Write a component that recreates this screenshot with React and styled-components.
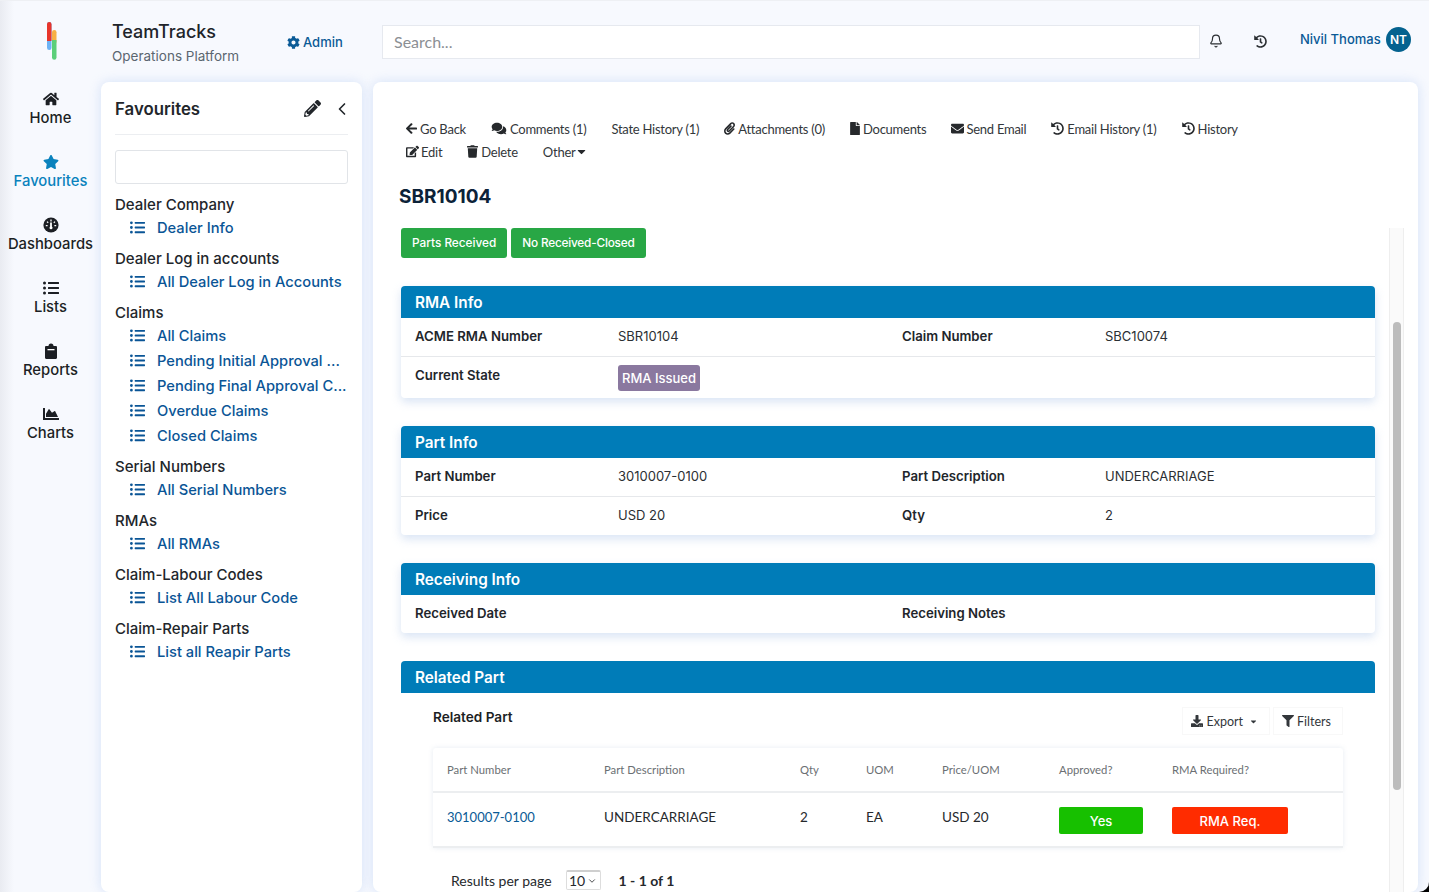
import React from 'react';
import styled, { createGlobalStyle } from 'styled-components';
import {
  FaHome, FaStar, FaListUl, FaChartArea, FaCog, FaPencilAlt,
  FaArrowLeft, FaComments, FaPaperclip, FaFile, FaEnvelope, FaHistory, FaEdit, FaTrash,
  FaCaretDown, FaDownload, FaFilter,
} from 'react-icons/fa';
import { ChevronLeft, ChevronDown, Bell } from 'lucide-react';

const GlobalStyle = createGlobalStyle`
  html, body { margin: 0; height: 100%; overflow: hidden; background: #000; }
  body { font-family: Inter, "Noto Sans", sans-serif; color: #1c1f24; }
  * { box-sizing: border-box; }
`;

const Page = styled.div`
  height: 100vh;
  display: grid;
  grid-template-columns: 101px 1fr;
  grid-template-rows: 82px 1fr;
  overflow: hidden;
  border-bottom-right-radius: 10px;
  background: linear-gradient(90deg, #e9ebf1 0, #f7f9fe 14px);
  box-shadow: inset 0 1px 0 #eef0f4;
`;

const LogoCell = styled.div`
  display: flex;
  justify-content: center;
  padding: 21px 0 0 3px;
`;

const Header = styled.header`
  display: flex;
  align-items: flex-start;
  padding: 25px 18px 0 11px;
`;

const Brand = styled.div`
  width: 175px;
`;

const BrandName = styled.div`
  font-size: 18px;
  line-height: 14px;
  font-weight: 500;
  color: #20242a;
`;

const BrandSub = styled.div`
  font-size: 13.5px;
  margin-top: 9px;
  color: #5b6670;
`;

const AdminLink = styled.a`
  width: 95px;
  display: flex;
  align-items: center;
  gap: 3px;
  font-size: 13px;
  font-weight: 500;
  color: #0a5a96;
  padding-top: 9px;
`;

const Search = styled.div`
  width: 818px;
  height: 34px;
  background: #fff;
  border: 1px solid #e6e9ef;
  font-family: Lato, sans-serif;
  font-size: 16px;
  color: #8b8f94;
  display: flex;
  align-items: center;
  padding: 0 0 2px 11px;
`;

const IconSlot = styled.div`
  width: ${p => p.$w}px;
  height: 34px;
  margin-top: -1px;
  display: flex;
  align-items: center;
  justify-content: center;
  color: #2b2f33;
`;

const UserName = styled.div`
  font-size: 13px;
  font-weight: 500;
  color: #0a5a96;
  width: 86px;
  margin-left: 12px;
  padding-top: 6px;
`;

const Avatar = styled.div`
  width: 25px;
  height: 25px;
  border-radius: 50%;
  margin-top: 2px;
  background: #04628f;
  color: #fff;
  font-size: 12px;
  font-weight: 600;
  display: flex;
  align-items: center;
  justify-content: center;
`;

const Rail = styled.nav`
  display: flex;
  flex-direction: column;
  padding-top: 7px;
`;

const RailItem = styled.div`
  height: 63px;
  display: flex;
  flex-direction: column;
  align-items: center;
  gap: 1px;
  padding-top: 1px;
  font-size: 14.8px;
  font-weight: 500;
  color: ${p => (p.$active ? '#0a82bd' : '#1c1f24')};
  svg { font-size: 16px; height: 18px; }
`;

const Body = styled.div`
  display: flex;
  gap: 11px;
  padding-right: 11px;
  min-height: 0;
`;

const Panel = styled.aside`
  width: 261px;
  background: #fff;
  border-radius: 8px;
  box-shadow: 0 0 12px rgba(170, 198, 240, 0.45);
  padding: 0 14px;
`;

const PanelHead = styled.div`
  height: 53px;
  border-bottom: 1px solid #eceef1;
  display: flex;
  align-items: center;
  font-size: 16.8px;
  font-weight: 600;
  color: #22262b;
  padding-top: 1px;
`;

const PanelTitle = styled.div`
  flex: 1;
`;

const PanelTool = styled.div`
  display: flex;
  align-items: center;
  margin-left: ${p => p.$gap || 0}px;
  margin-right: ${p => p.$right || 0}px;
`;

const PanelInput = styled.div`
  height: 34px;
  margin-top: 15px;
  margin-bottom: 9px;
  border: 1px solid #e1e4e8;
  border-radius: 3px;
`;

const Group = styled.div`
  margin-bottom: 7px;
`;

const GroupName = styled.div`
  height: 22px;
  font-size: 15px;
  line-height: 24px;
  font-weight: 500;
  color: #22262b;
`;

const FavLink = styled.div`
  display: flex;
  align-items: center;
  height: 25px;
  padding-left: 15px;
  gap: 12px;
  font-size: 14.7px;
  font-weight: 500;
  color: #0a5596;
  white-space: nowrap;
  svg { flex: none; font-size: 15px; }
`;

const Main = styled.main`
  flex: 1;
  min-width: 0;
  background: #fff;
  border-radius: 8px;
  box-shadow: 0 0 12px rgba(170, 198, 240, 0.45);
  display: flex;
  flex-direction: column;
  padding-top: 35px;
  overflow: hidden;
`;

const Toolbar = styled.div`
  display: flex;
  flex-wrap: wrap;
  column-gap: 25px;
  padding: 0 160px 0 33px;
`;

const ToolItem = styled.a`
  display: flex;
  align-items: center;
  gap: ${p => p.$gap ?? 3}px;
  height: 23px;
  font-family: Lato, sans-serif;
  font-size: 13px;
  letter-spacing: -0.25px;
  color: #33373b;
  white-space: nowrap;
  svg { height: 13px; width: ${p => p.$iconW || 13}px; color: #26292c; flex: none; }
`;

const RecordTitle = styled.h1`
  margin: 22px 0 0 26px;
  font-size: 19px;
  line-height: 23px;
  font-weight: 700;
  color: #0c2238;
`;

const Scroller = styled.div`
  flex: 1;
  min-height: 0;
  margin-top: 20px;
  display: flex;
  overflow: hidden;
`;

const ScrollContent = styled.div`
  width: 1016px;
  padding: 0 14px 0 28px;
  flex: none;
`;

const ScrollTrack = styled.div`
  width: 15px;
  background: #fafafa;
  border-left: 1px solid #eee;
  border-right: 1px solid #eee;
  padding: 94px 2px 0 3px;
`;

const ScrollThumb = styled.div`
  width: 8px;
  height: 468px;
  border-radius: 4px;
  background: #bcbcbc;
`;

const StateRow = styled.div`
  display: flex;
  gap: 4px;
  margin-bottom: 28px;
`;

const StateButton = styled.div`
  height: 30px;
  padding: 0 11px;
  border-radius: 3px;
  background: #28a745;
  color: #fff;
  font-size: 11.8px;
  font-weight: 500;
  letter-spacing: ${p => (p.$tight ? '-0.2px' : '0')};
  display: flex;
  align-items: center;
`;

const Card = styled.section`
  margin-bottom: 28px;
  border-radius: 4px;
  box-shadow: 0 4px 10px rgba(170, 195, 230, 0.45);
`;

const CardHead = styled.div`
  height: 32px;
  background: #007cb8;
  color: #fff;
  border-radius: 4px 4px 0 0;
  font-size: 15.3px;
  font-weight: 600;
  padding-left: 14px;
  display: flex;
  align-items: center;
`;

const FieldRow = styled.div`
  display: grid;
  grid-template-columns: 203px 284px 203px 1fr;
  height: ${p => p.$h}px;
  padding: 10px 0 0 14px;
  font-size: 13px;
  border-bottom: ${p => (p.$last ? 'none' : '1px solid #e6e8eb')};
`;

const FieldLabel = styled.div`
  font-size: 13.2px;
  font-weight: 600;
  color: #22262b;
`;

const FieldValue = styled.div`
  color: #2b2f33;
`;

const StateBadge = styled.span`
  display: inline-block;
  vertical-align: top;
  height: 26px;
  line-height: 26px;
  margin-top: -2px;
  padding: 0 4px;
  border-radius: 3px;
  background: #8a789f;
  color: #fff;
  font-weight: 500;
`;

const Related = styled.div`
  padding: 0 32px;
`;

const RelatedHead = styled.div`
  height: 55px;
  display: flex;
  align-items: flex-start;
`;

const RelatedTitle = styled.div`
  flex: 1;
  padding-top: 16px;
  font-size: 13.6px;
  font-weight: 600;
`;

const GridButton = styled.div`
  height: 28px;
  margin-top: 14px;
  padding: 0 11px 0 8px;
  margin-left: ${p => p.$gap || 0}px;
  border: 1px solid #f8f8f8;
  display: flex;
  align-items: center;
  gap: 3px;
  font-family: Lato, sans-serif;
  font-size: 12.5px;
  color: #33373b;
  svg { font-size: 12px; }
`;

const ExportCaret = styled(FaCaretDown)`
  margin-left: 3px;
`;

const Table = styled.table`
  width: 100%;
  border-collapse: collapse;
  table-layout: fixed;
  font-family: Lato, sans-serif;
  box-shadow: 0 0 5px rgba(200, 210, 225, 0.45);
  border-radius: 3px;
`;

const Th = styled.th`
  height: 44px;
  width: ${p => p.$w}px;
  padding: 0 0 0 14px;
  text-align: left;
  font-size: 11.3px;
  font-weight: 400;
  color: #6b6f73;
  border-bottom: 2px solid #eceef0;
`;

const Td = styled.td`
  height: 55px;
  padding: 0 0 6px 14px;
  font-size: 13.5px;
  color: #26292c;
  border-bottom: 2px solid #eceef0;
`;

const PartLink = styled.a`
  font-size: 13px;
  color: #0a5a96;
`;

const Pill = styled.div`
  width: ${p => p.$w}px;
  height: 27px;
  margin-top: 8px;
  border-radius: 2px;
  background: ${p => p.$bg};
  color: #fff;
  font-family: Inter, sans-serif;
  font-size: 13px;
  font-weight: 500;
  display: flex;
  align-items: center;
  justify-content: center;
`;

const Pager = styled.div`
  display: flex;
  align-items: center;
  height: 24px;
  margin-top: 20px;
  padding-left: 18px;
  font-family: Lato, sans-serif;
  font-size: 14px;
  color: #26292c;
`;

const PerPage = styled.div`
  margin: 0 18px 0 14px;
  width: 35px;
  height: 20px;
  border: 1px solid #ddd;
  border-top: 2px solid #cfcfcf;
  border-radius: 2px;
  display: flex;
  align-items: center;
  justify-content: center;
  gap: 2px;
`;

const PageCount = styled.b`
  font-weight: 700;
`;

const Logo = () => (
  <svg width="12" height="40" viewBox="0 0 12 40">
    <rect x="1" y="1" width="4.5" height="28" rx="2.2" fill="#6db3f5" />
    <path d="M1 3.2a2.2 2.2 0 0 1 4.5 0V20H1z" fill="#e8352b" />
    <rect x="6" y="9" width="4.5" height="14" rx="2.2" fill="#f7b044" />
    <path d="M6 19h4.5v17.5a2.2 2.2 0 0 1-4.5 0z" fill="#5ccf7a" />
  </svg>
);

const GaugeIcon = () => (
  <svg viewBox="0 0 16 16" width="16" height="16">
    <circle cx="8" cy="8" r="7.6" fill="currentColor" />
    <path d="M8 2.5v2M4 4.6l1.2 1.2M12 4.6l-1.2 1.2M2.8 8.6h1.8M11.4 8.6h1.8" stroke="#fff" strokeWidth="1.3" />
    <path d="M8 5.5v5" stroke="#fff" strokeWidth="1.8" />
    <circle cx="8" cy="10.8" r="1.5" fill="#fff" />
  </svg>
);

const ReportIcon = () => (
  <svg viewBox="0 0 16 16" width="16" height="16">
    <path d="M3.2 3h2.3a2.5 2.5 0 0 1 5 0h2.3c.7 0 1.2.5 1.2 1.2v10.6c0 .7-.5 1.2-1.2 1.2H3.2C2.5 16 2 15.5 2 14.8V4.2C2 3.5 2.5 3 3.2 3z" fill="currentColor" />
    <rect x="4.5" y="6" width="7" height="1.3" fill="#fff" />
  </svg>
);

const navItems = [
  { label: 'Home', Icon: FaHome },
  { label: 'Favourites', Icon: FaStar, active: true },
  { label: 'Dashboards', Icon: GaugeIcon },
  { label: 'Lists', Icon: FaListUl },
  { label: 'Reports', Icon: ReportIcon },
  { label: 'Charts', Icon: FaChartArea },
];

const favourites = [
  { name: 'Dealer Company', links: ['Dealer Info'] },
  { name: 'Dealer Log in accounts', links: ['All Dealer Log in Accounts'] },
  { name: 'Claims', links: ['All Claims', 'Pending Initial Approval ...', 'Pending Final Approval C...', 'Overdue Claims', 'Closed Claims'] },
  { name: 'Serial Numbers', links: ['All Serial Numbers'] },
  { name: 'RMAs', links: ['All RMAs'] },
  { name: 'Claim-Labour Codes', links: ['List All Labour Code'] },
  { name: 'Claim-Repair Parts', links: ['List all Reapir Parts'] },
];

const tools = [
  { label: 'Go Back', Icon: FaArrowLeft, iconW: 11 },
  { label: 'Comments (1)', Icon: FaComments, iconW: 16 },
  { label: 'State History (1)' },
  { label: 'Attachments (0)', Icon: FaPaperclip, iconW: 11 },
  { label: 'Documents', Icon: FaFile, iconW: 10 },
  { label: 'Send Email', Icon: FaEnvelope, iconW: 13, gap: 2 },
  { label: 'Email History (1)', Icon: FaHistory, iconW: 13 },
  { label: 'History', Icon: FaHistory, iconW: 13 },
  { label: 'Edit', Icon: FaEdit, iconW: 13, gap: 2 },
  { label: 'Delete', Icon: FaTrash, iconW: 11 },
];

const columns = [
  ['Part Number', 157], ['Part Description', 196], ['Qty', 66], ['UOM', 76],
  ['Price/UOM', 117], ['Approved?', 113], ['RMA Required?', 185],
];

export default function App() {
  return (
    <Page>
      <GlobalStyle />
      <LogoCell><Logo /></LogoCell>
      <Header>
        <Brand>
          <BrandName>TeamTracks</BrandName>
          <BrandSub>Operations Platform</BrandSub>
        </Brand>
        <AdminLink><FaCog size={13} />Admin</AdminLink>
        <Search>Search...</Search>
        <IconSlot $w={32}><Bell size={14} /></IconSlot>
        <IconSlot $w={56}><FaHistory size={13} /></IconSlot>
        <UserName>Nivil Thomas</UserName>
        <Avatar>NT</Avatar>
      </Header>
      <Rail>
        {navItems.map(({ label, Icon, active }) => (
          <RailItem key={label} $active={active}><Icon />{label}</RailItem>
        ))}
      </Rail>
      <Body>
        <Panel>
          <PanelHead>
            <PanelTitle>Favourites</PanelTitle>
            <PanelTool><FaPencilAlt size={17} /></PanelTool>
            <PanelTool $gap={11} $right={-4}><ChevronLeft size={20} /></PanelTool>
          </PanelHead>
          <PanelInput />
          {favourites.map(group => (
            <Group key={group.name}>
              <GroupName>{group.name}</GroupName>
              {group.links.map(link => (
                <FavLink key={link}><FaListUl />{link}</FavLink>
              ))}
            </Group>
          ))}
        </Panel>
        <Main>
          <Toolbar>
            {tools.map(({ label, Icon, iconW, gap }) => (
              <ToolItem key={label} $iconW={iconW} $gap={gap}>{Icon && <Icon />}{label}</ToolItem>
            ))}
            <ToolItem $iconW={9} $gap={1}>Other<FaCaretDown /></ToolItem>
          </Toolbar>
          <RecordTitle>SBR10104</RecordTitle>
          <Scroller>
            <ScrollContent>
              <StateRow>
                <StateButton>Parts Received</StateButton>
                <StateButton $tight>No Received-Closed</StateButton>
              </StateRow>
              <Card>
                <CardHead>RMA Info</CardHead>
                <FieldRow $h={39}>
                  <FieldLabel>ACME RMA Number</FieldLabel><FieldValue>SBR10104</FieldValue>
                  <FieldLabel>Claim Number</FieldLabel><FieldValue>SBC10074</FieldValue>
                </FieldRow>
                <FieldRow $h={41} $last>
                  <FieldLabel>Current State</FieldLabel>
                  <FieldValue><StateBadge>RMA Issued</StateBadge></FieldValue>
                </FieldRow>
              </Card>
              <Card>
                <CardHead>Part Info</CardHead>
                <FieldRow $h={39}>
                  <FieldLabel>Part Number</FieldLabel><FieldValue>3010007-0100</FieldValue>
                  <FieldLabel>Part Description</FieldLabel><FieldValue>UNDERCARRIAGE</FieldValue>
                </FieldRow>
                <FieldRow $h={38} $last>
                  <FieldLabel>Price</FieldLabel><FieldValue>USD 20</FieldValue>
                  <FieldLabel>Qty</FieldLabel><FieldValue>2</FieldValue>
                </FieldRow>
              </Card>
              <Card>
                <CardHead>Receiving Info</CardHead>
                <FieldRow $h={38} $last>
                  <FieldLabel>Received Date</FieldLabel><FieldValue />
                  <FieldLabel>Receiving Notes</FieldLabel><FieldValue />
                </FieldRow>
              </Card>
              <CardHead>Related Part</CardHead>
              <Related>
                <RelatedHead>
                  <RelatedTitle>Related Part</RelatedTitle>
                  <GridButton>
                    <FaDownload />Export<ExportCaret size={9} />
                  </GridButton>
                  <GridButton $gap={3}><FaFilter />Filters</GridButton>
                </RelatedHead>
                <Table>
                  <thead>
                    <tr>{columns.map(([c, w]) => <Th key={c} $w={w}>{c}</Th>)}</tr>
                  </thead>
                  <tbody>
                    <tr>
                      <Td><PartLink>3010007-0100</PartLink></Td>
                      <Td>UNDERCARRIAGE</Td>
                      <Td>2</Td>
                      <Td>EA</Td>
                      <Td>USD 20</Td>
                      <Td><Pill $w={84} $bg="#17c000">Yes</Pill></Td>
                      <Td><Pill $w={116} $bg="#ff2c00">RMA Req.</Pill></Td>
                    </tr>
                  </tbody>
                </Table>
                <Pager>
                  Results per page
                  <PerPage>10<ChevronDown size={10} /></PerPage>
                  <PageCount>1 - 1 of 1</PageCount>
                </Pager>
              </Related>
            </ScrollContent>
            <ScrollTrack><ScrollThumb /></ScrollTrack>
          </Scroller>
        </Main>
      </Body>
    </Page>
  );
}
